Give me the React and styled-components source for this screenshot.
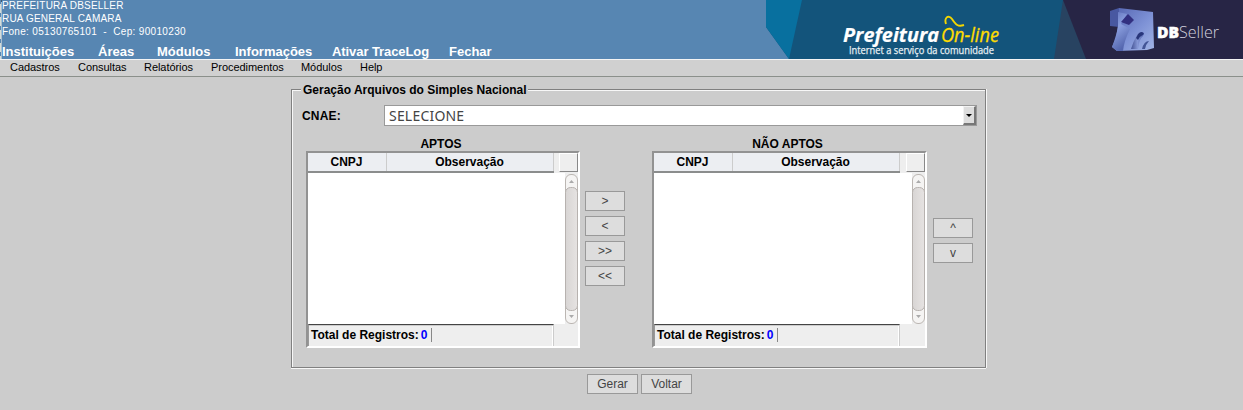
import React from 'react';
import styled, { createGlobalStyle } from 'styled-components';

const Global = createGlobalStyle`
  * { box-sizing: border-box; }
  body { margin: 0; background: #ccc; color: #000; font: 12px "Liberation Sans", Arial, sans-serif; overflow: hidden; }
`;
const Page = styled.div`height: 410px; display: flex; flex-direction: column;`;
const Header = styled.header`
  height: 60px; flex: none; display: flex; justify-content: space-between;
  background: #5786b2; border-bottom: 1px solid #f4f4f4; color: #fff;
`;
const HeaderInfo = styled.div`
  display: flex; flex-direction: column; width: 760px; padding-left: 2px;
  background:
    repeating-linear-gradient(#5786b2 0 4px, #d5dcd8 4px 13px) 0 0 / 1px 100% no-repeat,
    linear-gradient(#3c5a70 0 2px, #a9bfd0 2px) 1px 0 / 1px 100% no-repeat;
`;
const InfoLine = styled.div`
  font-size: 10px; line-height: 13px; height: 13px; white-space: pre; margin-top: ${p => p.$first ? '-1px' : 0};
  letter-spacing: ${p => p.$spacing || 0}px;
`;
const MainNav = styled.nav`display: flex; margin-top: 6px; font-size: 13px; font-weight: bold; line-height: 15px;`;
const SubNav = styled.nav`
  height: 17px; flex: none; display: flex; padding-left: 10px; font-size: 11px; line-height: 15px;
  background: #d0d0d0; border-bottom: 1px solid #8b908b;
`;
const NavItem = styled.span`width: ${p => p.$w}px; white-space: nowrap; letter-spacing: ${p => p.$spacing || 0}px;`;
const Banner = styled.svg`display: block; flex: none; width: 477px; height: 59px;`;

const Group = styled.fieldset`
  width: 696px; height: 286px; margin: 6px 0 0 291px; padding: 0 8px 0 9px; min-width: 0;
  border: 0 solid transparent; border-width: 0; position: relative; flex: none;
`;
const GroupFrame = styled.div`
  position: absolute; inset: 6px 0 0 0; border: 1px solid #808080; box-shadow: inset 1px 1px #f7f7f7, 0 1px #f7f7f7, 1px 0 #f7f7f7;
  width: 695px; height: 279px; pointer-events: none;
`;
const Legend = styled.div`
  position: relative; width: 227px; height: 14px; line-height: 14px; padding-left: 2px; margin-left: 1px;
  font-weight: bold; background: #ccc; white-space: nowrap;
`;
const FieldRow = styled.div`display: flex; align-items: center; height: 21px; margin-top: 8px; padding-left: 2px;`;
const Label = styled.label`width: 82px; font-weight: bold; letter-spacing: 0.2px;`;
const Select = styled.div`
  width: 593px; height: 21px; display: flex; justify-content: space-between; align-items: center;
  border: 1px solid #999; background: #fff; padding-left: 4px; color: #444;
  font: 14px "Noto Sans", "Open Sans", sans-serif; line-height: 19px; letter-spacing: 0.2px;
`;
const SelectArrow = styled.span`
  width: 13px; height: 19px; display: flex; align-items: center; justify-content: center; background: #ddd;
  border: solid; border-width: 1px 2px 2px 1px; border-color: #f2f2f2 #777 #777 #f2f2f2;
  &::after { content: ''; border: 3px solid transparent; border-top: 3px solid #000; border-bottom: 0; }
`;
const Columns = styled.div`display: flex; margin: 11px 0 0 6px; height: 211px;`;
const ListBlock = styled.section`width: ${p => p.$w}px; flex: none;`;
const ListTitle = styled.div`height: 14px; line-height: 14px; text-align: center; font-weight: bold; padding-right: 4px;`;
const Grid = styled.div`
  height: 197px; border: 2px solid; border-color: #929292 #fff #fff #929292; background: #eee;
  display: flex; flex-direction: column; font-weight: bold;
`;
const GridHead = styled.div`display: flex; height: 20px; flex: none; line-height: 18px; text-align: center;`;
const HeadCell = styled.div`
  width: ${p => p.$w}px; background: #eceef2; border-bottom: 2px solid #8b8d8d;
  box-shadow: inset -1px 0 #ccc; padding-right: 2px;
`;
const Corner = styled.div`
  width: 19px; height: 19px; margin-left: auto; border: 1px solid; border-color: #fff #888 #888 #fff;
`;
const GridBody = styled.div`display: flex; justify-content: flex-end; height: 151px; background: #fff; flex: none;`;
const Track = styled.svg`display: block; width: 13px; height: 151px;`;
const GridFoot = styled.div`
  width: 246px; flex: 1; border-top: 1px solid #444; border-right: 1px solid #ccc; border-left: 1px solid #999;
  display: flex; align-items: center; padding: 0 0 2px 2px; box-shadow: inset 0 1px #ccc, inset -1px 0 #fff;
`;
const Count = styled.span`color: #00f; margin-left: 2px; padding-right: 4px; border-right: 1px solid #888; line-height: 14px;`;
const Stack = styled.div`
  display: flex; flex-direction: column; gap: 5px; margin: ${p => p.$top}px ${p => p.$after}px 0 ${p => p.$before}px;
`;
const Button = styled.button`
  width: ${p => p.$w || 40}px; height: 20px; padding: 0; background: #ddd; border: 1px solid #999; border-radius: 0;
  color: #444; font: 12px "Liberation Sans", Arial, sans-serif; line-height: 18px;
`;
const Actions = styled.div`display: flex; gap: 3px; margin: 5px 0 0 587px;`;

const mainItems = [['Instituições', 96], ['Áreas', 59], ['Módulos', 78], ['Informações', 97], ['Ativar TraceLog', 117, -0.08], ['Fechar', 60]];
const subItems = [['Cadastros', 68], ['Consultas', 66], ['Relatórios', 67], ['Procedimentos', 90], ['Módulos', 59], ['Help', 40]];

function HeaderBanner() {
  return (
    <Banner viewBox="766 0 477 59">
      <defs>
        <linearGradient id="cube" x1="0" y1="0" x2="1" y2="1">
          <stop offset="0" stopColor="#5363b0" /><stop offset=".55" stopColor="#7d91d5" /><stop offset="1" stopColor="#a3b5e6" />
        </linearGradient>
        <linearGradient id="fold" x1="0" y1="0" x2="1" y2="0">
          <stop offset="0" stopColor="#435294" /><stop offset=".5" stopColor="#8496d4" /><stop offset="1" stopColor="#5161ac" />
        </linearGradient>
        <linearGradient id="wave" x1="0" y1="0" x2=".4" y2="1">
          <stop offset="0" stopColor="#5f71bb" /><stop offset=".45" stopColor="#8b9fdf" /><stop offset="1" stopColor="#5466ae" />
        </linearGradient>
      </defs>
      <path d="M766 0H1243V59H789L766 27Z" fill="#13547b" />
      <path d="M766 0H802L789 59L766 27Z" fill="#08709f" />
      <path d="M1063 0H1243V59H1054Z" fill="#284361" />
      <path d="M1063 0H1243V59H1086Z" fill="#272545" />
      <g fontFamily='"Open Sans", "Noto Sans", sans-serif'>
        <text x="843" y="42" fontSize="20" fontWeight="700" fontStyle="italic" fill="#fff" stroke="#fff" strokeWidth=".2" textLength="96" lengthAdjust="spacingAndGlyphs">Prefeitura</text>
        <text x="941" y="42" fontSize="20" fontStyle="italic" fill="#ffdc00" stroke="#ffdc00" strokeWidth=".3" textLength="58" lengthAdjust="spacingAndGlyphs">On-line</text>
        <text x="849" y="53.5" fontSize="10.5" fill="#e8f0f3" stroke="#e8f0f3" strokeWidth=".25" textLength="145" lengthAdjust="spacingAndGlyphs">Internet a serviço da comunidade</text>
      </g>
      <path d="M946 24C944 18 948 14 952 19C956 25 958 27 964 25" fill="none" stroke="#f4d600" strokeWidth="1.9" />
      <path d="M1119 8L1153 12L1154 48L1147 50L1117 51L1112 47L1116 38L1118 26Z" fill="url(#cube)" />
      <path d="M1110 11L1119 8V27L1110 26Z" fill="#4858a1" />
      <path d="M1118 12L1127 14L1121 24L1130 29Q1124 41 1123 51H1117L1112 47Q1117 34 1118 26Z" fill="url(#wave)" />
      <path d="M1128 14L1134 20L1129 25L1121 22Z" fill="#323080" />
      <path d="M1131 49Q1133 42 1137 35Q1141 30 1144 33L1143 36Q1139 39 1138 49Z" fill="url(#fold)" />
      <path d="M1136 38L1138 34Q1142 30 1144 34Q1140 36 1138 40Z" fill="#28367b" />
      <path d="M1142 49Q1144 41 1149 41Q1146 44 1145 49Z" fill="#435596" />
      <text x="1157" y="38" fontFamily="Open Sans, sans-serif" fontWeight="800" fontSize="16" fill="#fff" stroke="#fff" strokeWidth=".5" textLength="22" lengthAdjust="spacingAndGlyphs">DB</text>
      <text x="1179" y="38" fontFamily="Open Sans, sans-serif" fontWeight="300" fontSize="17" fill="#d2d1dd" textLength="40" lengthAdjust="spacingAndGlyphs">Seller</text>
    </Banner>
  );
}

function ListGrid({ title, width }) {
  const extra = width - 274;
  return (
    <ListBlock $w={width}>
      <ListTitle>{title}</ListTitle>
      <Grid>
        <GridHead>
          <HeadCell $w={79}>CNPJ</HeadCell><HeadCell $w={167}>Observação</HeadCell><Corner />
        </GridHead>
        <GridBody>
          <Track viewBox="0 0 13 151">
            <defs><linearGradient id={`thumb${extra}`}><stop stopColor="#d8d5d4" /><stop offset="1" stopColor="#e6e3e2" /></linearGradient></defs>
            <path d="M0 0H13V151H0Z" fill="#eee" />
            <rect x=".5" y="1.5" width="12" height="149" rx="5.5" fill="#f5f4f3" stroke="#bbb6b2" />
            <rect x=".5" y="14.5" width="12" height="123" rx="5" fill={`url(#thumb${extra})`} stroke="#b7b2af" />
            <path d="M4 10L6.5 7L9 10ZM4 142L6.5 145L9 142Z" fill="#aaa" />
          </Track>
        </GridBody>
        <GridFoot>Total de Registros: <Count>0</Count></GridFoot>
      </Grid>
    </ListBlock>
  );
}

export default function App() {
  return (
    <Page>
      <Global />
      <Header>
        <HeaderInfo>
          <InfoLine $first $spacing={0.2}>PREFEITURA DBSELLER</InfoLine>
          <InfoLine $spacing={0.18}>RUA GENERAL CAMARA</InfoLine>
          <InfoLine $spacing={0.33}>{'Fone: 05130765101  -  Cep: 90010230'}</InfoLine>
          <MainNav>{mainItems.map(([t, w, s]) => <NavItem key={t} $w={w} $spacing={s}>{t}</NavItem>)}</MainNav>
        </HeaderInfo>
        <HeaderBanner />
      </Header>
      <SubNav>{subItems.map(([t, w]) => <NavItem key={t} $w={w} $spacing={-0.05}>{t}</NavItem>)}</SubNav>
      <Group>
        <GroupFrame />
        <Legend>Geração Arquivos do Simples Nacional</Legend>
        <FieldRow><Label>CNAE:</Label><Select>SELECIONE<SelectArrow /></Select></FieldRow>
        <Columns>
          <ListGrid title="APTOS" width={274} />
          <Stack $top={54} $before={5} $after={27}>
            {['>', '<', '>>', '<<'].map(t => <Button key={t}>{t}</Button>)}
          </Stack>
          <ListGrid title="NÃO APTOS" width={275} />
          <Stack $top={81} $before={6} $after={0}><Button>^</Button><Button>v</Button></Stack>
        </Columns>
      </Group>
      <Actions><Button $w={51}>Gerar</Button><Button $w={51}>Voltar</Button></Actions>
    </Page>
  );
}
